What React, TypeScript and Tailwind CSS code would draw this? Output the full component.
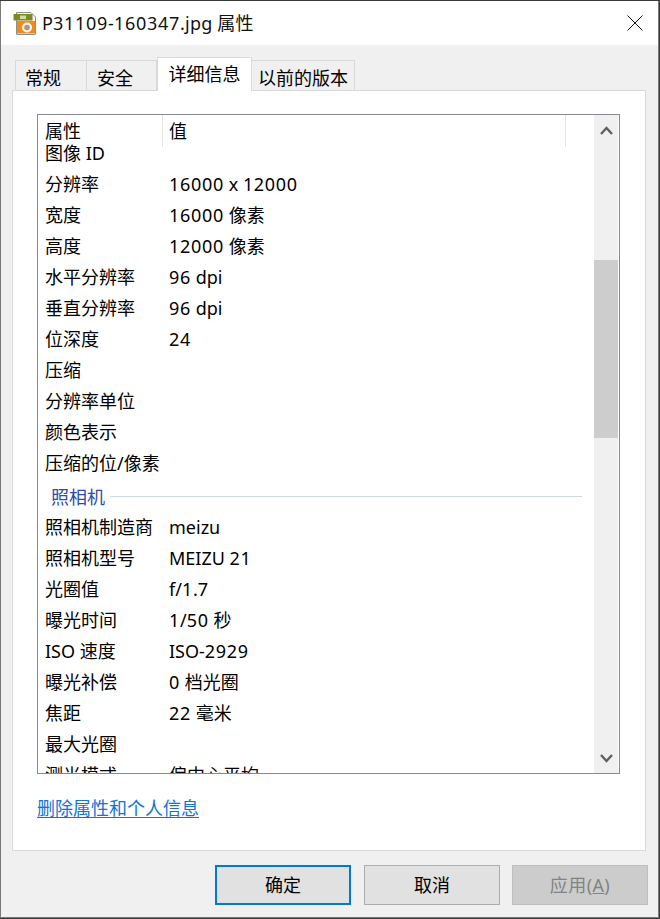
const font = { fontFamily: '"Noto Sans", "Noto Sans CJK SC", sans-serif' };

const topRows = [
  ["图像 ID", ""],
  ["分辨率", "16000 x 12000"],
  ["宽度", "16000 像素"],
  ["高度", "12000 像素"],
  ["水平分辨率", "96 dpi"],
  ["垂直分辨率", "96 dpi"],
  ["位深度", "24"],
  ["压缩", ""],
  ["分辨率单位", ""],
  ["颜色表示", ""],
  ["压缩的位/像素", ""],
];

const cameraRows = [
  ["照相机制造商", "meizu"],
  ["照相机型号", "MEIZU 21"],
  ["光圈值", "f/1.7"],
  ["曝光时间", "1/50 秒"],
  ["ISO 速度", "ISO-2929"],
  ["曝光补偿", "0 档光圈"],
  ["焦距", "22 毫米"],
  ["最大光圈", ""],
  ["测光模式", "偏中心平均"],
];

// digits run wider in the reference's UI font
const Wide = ({ text }: { text: string }) => (
  <>
    {text.split(/(\d+)/).map((part, i) =>
      /\d/.test(part) ? (
        <span key={i} className="tracking-[0.7px]">
          {part}
        </span>
      ) : (
        part
      ),
    )}
  </>
);

const Row = ({ name, value }: { name: string; value: string }) => (
  <div className="flex h-[31px] shrink-0 items-center pb-[4px] pl-[7px] leading-none whitespace-nowrap">
    <span className="w-[124px]">{name}</span>
    <span>
      <Wide text={value} />
    </span>
  </div>
);

const FileIcon = () => (
  <svg width="24" height="24" viewBox="0 0 24 24" className="shrink-0">
    <path d="M3.5 1.5h14.5l4.5 4.5V23a.5.5 0 0 1-.5.5H4a.5.5 0 0 1-.5-.5z" fill="#f4f4f2" stroke="#8f8f8f" />
    <path d="M.5 3h19v6.5H.5z" fill="#7d8a24" />
    <path d="M7 4.5h6v3.5H7z" fill="#d5d9a8" />
    <path d="M4 10h18v12.5H4z" fill="#f08a1d" />
    <circle cx="14" cy="16.5" r="5" fill="#f7f4ee" />
    <circle cx="14" cy="16.5" r="2.8" fill="#9a9a9a" />
    <circle cx="14" cy="16.5" r="1.2" fill="#f08a1d" />
  </svg>
);

export default function App() {
  return (
    <div className="h-[919px] w-[660px] overflow-hidden bg-[#3a3a3a] pt-px pr-px text-[18px] text-black" style={font}>
      <div className="flex h-[917px] w-[659px] flex-col border-r border-b border-l border-[#7a7a7a] bg-[#f0f0f0]">
        {/* Title bar */}
        <div className="flex h-[44px] shrink-0 items-center bg-white pr-[15px] pl-[12px]">
          <FileIcon />
          <span className="ml-[5px] tracking-[0.2px] text-[#111]">
            <Wide text="P31109-160347.jpg 属性" />
          </span>
          <svg width="16" height="16" viewBox="0 0 16 16" className="ml-auto" fill="none" stroke="#111" strokeWidth="1">
            <path d="M.5.5l15 15M15.5.5l-15 15" />
          </svg>
        </div>

        {/* Tabs */}
        <div className="relative z-10 mt-[12px] -mb-px flex h-[34px] shrink-0 items-end pl-[14px]">
          <div className="flex h-[31px] w-[72px] items-center border-t border-r border-l border-[#d9d9d9] pt-[5px] pl-[9px]">常规</div>
          <div className="flex h-[31px] w-[70px] items-center border-t border-r border-[#d9d9d9] pt-[5px] pl-[10px]">安全</div>
          <div className="flex h-[34px] w-[95px] items-center justify-center border-t border-r border-l border-[#d9d9d9] bg-white">详细信息</div>
          <div className="flex h-[31px] w-[103px] items-center justify-center border-t border-r border-[#d9d9d9] pt-[5px]">以前的版本</div>
        </div>

        {/* Panel */}
        <div className="ml-[11px] flex h-[761px] w-[634px] shrink-0 flex-col border border-[#d9d9d9] bg-white pt-[23px] pl-[24px]">
          <div className="flex h-[660px] w-[583px] shrink-0 border border-[#858a90] bg-white">
            <div className="min-w-0 flex-1 overflow-hidden">
              <div className="relative z-10 -mb-[8px] flex h-[32px] items-center pl-[7px]">
                <span className="h-full w-[118px] border-r border-[#e5e5e5] pt-[2px] leading-[28px]">属性</span>
                <span className="flex h-full w-[403px] border-r border-[#e5e5e5] pt-[2px] pl-[6px] leading-[28px]">值</span>
              </div>
              {topRows.map(([name, value]) => (
                <Row key={name} name={name} value={value} />
              ))}
              <div className="flex h-[33px] items-center pr-[12px] pl-[13px] text-[#2f4aa8]">
                <span className="mr-[5px] leading-none">照相机</span>
                <div className="h-px flex-1 bg-[#cfd9ec]" />
              </div>
              {cameraRows.map(([name, value]) => (
                <Row key={name} name={name} value={value} />
              ))}
            </div>

            {/* Scrollbar */}
            <div className="flex w-[25px] shrink-0 flex-col border-r border-white bg-[#f0f0f0]">
              <div className="flex h-[145px] shrink-0 justify-center pt-[11px]">
                <svg width="13" height="9" viewBox="0 0 13 9" fill="none" stroke="#606060" strokeWidth="2.4">
                  <path d="M1 8l5.5-6L12 8" />
                </svg>
              </div>
              <div className="h-[178px] w-[24px] bg-[#cdcdcd]" />
              <div className="flex flex-1 items-end justify-center pb-[10px]">
                <svg width="13" height="9" viewBox="0 0 13 9" fill="none" stroke="#606060" strokeWidth="2.4">
                  <path d="M1 1l5.5 6L12 1" />
                </svg>
              </div>
            </div>
          </div>
          <a className="mt-[23px] w-fit leading-[22px] text-[#0f74d8] underline underline-offset-2">删除属性和个人信息</a>
        </div>

        {/* Buttons */}
        <div className="flex flex-1 justify-end gap-[13px] pt-[14px] pr-[10px]">
          <button className="h-[40px] w-[136px] border-2 border-[#0078d7] bg-[#e1e1e1]">确定</button>
          <button className="h-[40px] w-[136px] border border-[#adadad] bg-[#e1e1e1]">取消</button>
          <button className="-ml-px h-[40px] w-[136px] border border-[#bfbfbf] bg-[#cccccc] tracking-[0.4px] text-[#838383]">
            应用(<span className="underline">A</span>)
          </button>
        </div>
      </div>
    </div>
  );
}
